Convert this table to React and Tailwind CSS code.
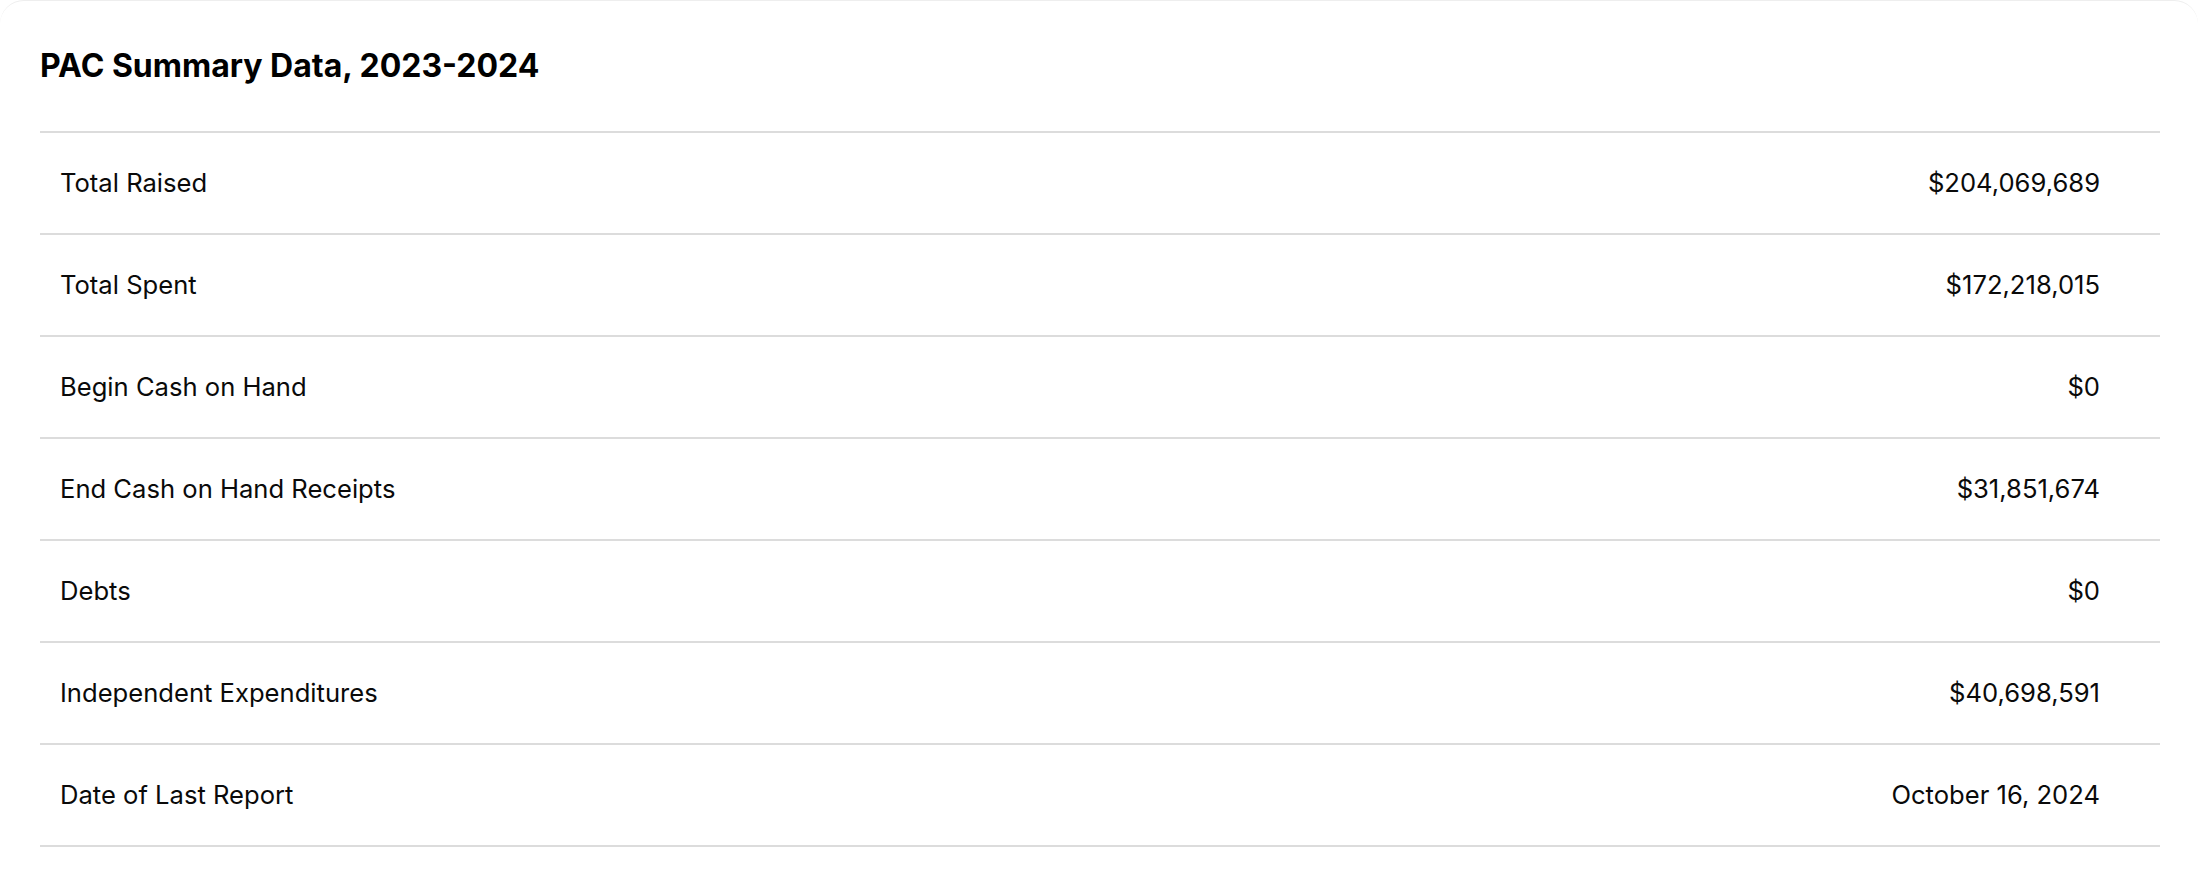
import React from "react";

const rows = [
  { label: "Total Raised", value: "$204,069,689" },
  { label: "Total Spent", value: "$172,218,015" },
  { label: "Begin Cash on Hand", value: "$0" },
  { label: "End Cash on Hand Receipts", value: "$31,851,674" },
  { label: "Debts", value: "$0" },
  { label: "Independent Expenditures", value: "$40,698,591" },
  { label: "Date of Last Report", value: "October 16, 2024" },
];

const App = () => {
  return (
    <div className="min-h-screen bg-white" style={{ fontFamily: "Inter, 'Noto Sans', sans-serif" }}>
      <section className="bg-white rounded-[24px] border-t border-[#eeeeee] pl-[40px] pr-[38px] pt-[47px] pb-[40px]">
        {/* Heading */}
        <h2 className="text-[32px] leading-[36px] font-bold text-black mb-[47px]">
          PAC Summary Data, 2023-2024
        </h2>

        {/* Summary rows */}
        <div className="border-t-2 border-[#dcdcdc]">
          {rows.map((row) => (
            <div
              key={row.label}
              className="h-[102px] flex items-center justify-between border-b-2 border-[#dcdcdc] pl-[20px] pr-[60px] text-[25.6px] text-[#0a0a0a]"
            >
              <span>{row.label}</span>
              <span>{row.value}</span>
            </div>
          ))}
        </div>
      </section>
    </div>
  );
};

export default App;
